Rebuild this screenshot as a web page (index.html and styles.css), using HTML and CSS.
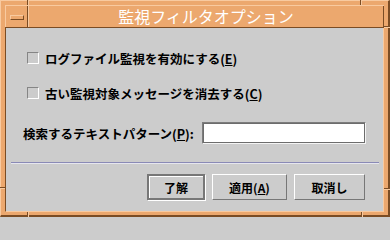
FILE: index.html
```html
<!DOCTYPE html>
<html lang="ja">
<head>
<meta charset="utf-8">
<title>監視フィルタオプション</title>
<link rel="stylesheet" href="styles.css">
</head>
<body>
<div class="window">
  <span class="mark mark-v mark-top-l"></span>
  <span class="mark mark-v mark-top-r"></span>
  <span class="mark mark-v mark-bot-l"></span>
  <span class="mark mark-v mark-bot-r"></span>
  <span class="mark mark-h mark-left-b"></span>
  <span class="mark mark-h mark-right-t"></span>
  <span class="mark mark-h mark-right-b"></span>
  <div class="titlebar">
    <div class="menu-btn"><span class="menu-icon"></span></div>
    <div class="title">監視フィルタオプション</div>
  </div>
  <div class="content">
    <div class="check-row"><span class="checkbox"></span><span class="check-label">ログファイル監視を有効にする(<u>E</u>)</span></div>
    <div class="check-row"><span class="checkbox"></span><span class="check-label">古い監視対象メッセージを消去する(<u>C</u>)</span></div>
    <div class="field-row">
      <span class="field-label">検索するテキストパターン(<u>P</u>):</span>
      <span class="field"></span>
    </div>
    <div class="separator"></div>
    <div class="buttons">
      <span class="btn btn-default">了解</span>
      <span class="btn btn-apply">適用(<u>A</u>)</span>
      <span class="btn btn-cancel">取消し</span>
    </div>
  </div>
</div>
</body>
</html>
```

FILE: styles.css
```css
html, body {
  margin: 0;
  padding: 0;
  width: 390px;
  height: 217px;
  overflow: hidden;
  background: #cccccc;
}

.window {
  position: relative;
  box-sizing: border-box;
  width: 390px;
  height: 217px;
  background: #eca86e;
  border-style: solid;
  border-width: 1px 2px 2px 1px;
  border-color: #f8caa0 #7a4c24 #7a4c24 #f8caa0;
  padding: 4px 4px 3px 4px;
  display: flex;
  flex-direction: column;
  font-family: "Noto Sans CJK JP", "Liberation Sans", sans-serif;
}

/* frame corner dividers */
.mark {
  position: absolute;
  box-sizing: border-box;
}
.mark-v {
  width: 2px;
  height: 5px;
  border-left: 1px solid #7a4c24;
  border-right: 1px solid #f8caa0;
}
.mark-h {
  height: 2px;
  width: 5px;
  border-top: 1px solid #7a4c24;
  border-bottom: 1px solid #f8caa0;
}
.mark-top-l { left: 26px; top: -1px; }
.mark-top-r { left: 359px; top: -1px; }
.mark-bot-l { left: 26px; bottom: -2px; }
.mark-bot-r { left: 360px; bottom: -2px; }
.mark-left-b { left: -1px; top: 186px; }
.mark-right-t { right: -2px; top: 25px; width: 6px; }
.mark-right-b { right: -2px; top: 187px; width: 6px; }

.titlebar {
  box-sizing: border-box;
  height: 23px;
  display: flex;
  border-top: 1px solid #f8caa0;
  border-bottom: 1px solid #7a4c24;
}

.menu-btn {
  box-sizing: border-box;
  width: 23px;
  border-left: 1px solid #f8caa0;
  border-right: 1px solid #7a4c24;
  display: flex;
  align-items: center;
  justify-content: center;
}

.menu-icon {
  box-sizing: border-box;
  width: 14px;
  height: 5px;
  margin-top: 1px;
  border: 1px solid;
  border-color: #f8caa0 #7a4c24 #7a4c24 #f8caa0;
}

.title {
  flex: 1;
  border-left: 1px solid #f8caa0;
  border-right: 1px solid #7a4c24;
  color: #ffffff;
  font-size: 16px;
  line-height: 21px;
  text-align: center;
  white-space: nowrap;
}

.content {
  flex: 1;
  background: #cccccc;
  border-left: 1px solid #7a4c24;
  border-right: 1px solid #f8caa0;
  border-bottom: 1px solid #f8caa0;
  display: flex;
  flex-direction: column;
  padding: 22px 0 11px 0;
  color: #000000;
  font-size: 12.5px;
  font-weight: bold;
}

.check-row {
  display: flex;
  align-items: center;
  height: 16px;
  margin-left: 21px;
  gap: 6px;
  white-space: nowrap;
}
.check-row + .check-row {
  margin-top: 19px;
}

.checkbox {
  box-sizing: border-box;
  width: 12px;
  height: 12px;
  border: 1px solid;
  border-color: #858585 #ffffff #ffffff #858585;
}

.field-row {
  display: flex;
  align-items: center;
  height: 22px;
  margin-top: 21px;
  margin-left: 17px;
  margin-right: 17px;
  white-space: nowrap;
}

.field-label {
  flex: 1;
}

.field {
  box-sizing: border-box;
  width: 164px;
  height: 22px;
  background: #ffffff;
  border: 1px solid;
  border-color: #7c7c7c #f4f4f4 #f4f4f4 #7c7c7c;
  box-shadow: inset 0 0 0 1px #6c6c6c;
}

.separator {
  height: 0;
  margin: 18px 4px 0 5px;
  border-top: 1px solid #8a8ab6;
  border-bottom: 1px solid #e6e6ee;
}

.buttons {
  display: flex;
  justify-content: flex-end;
  gap: 7px;
  margin-top: 10px;
  padding-right: 18px;
}

.btn {
  box-sizing: border-box;
  height: 26px;
  display: flex;
  align-items: center;
  justify-content: center;
  font-size: 12px;
  border: 1px solid;
  border-color: #ffffff #777777 #777777 #ffffff;
  white-space: nowrap;
}

.btn-default {
  width: 58px;
  border: 2px solid #777777;
  box-shadow: 1px 1px 0 #ffffff, inset 1px 1px 0 #ffffff;
}
.btn-apply { width: 75px; }
.btn-cancel { width: 71px; }
```
